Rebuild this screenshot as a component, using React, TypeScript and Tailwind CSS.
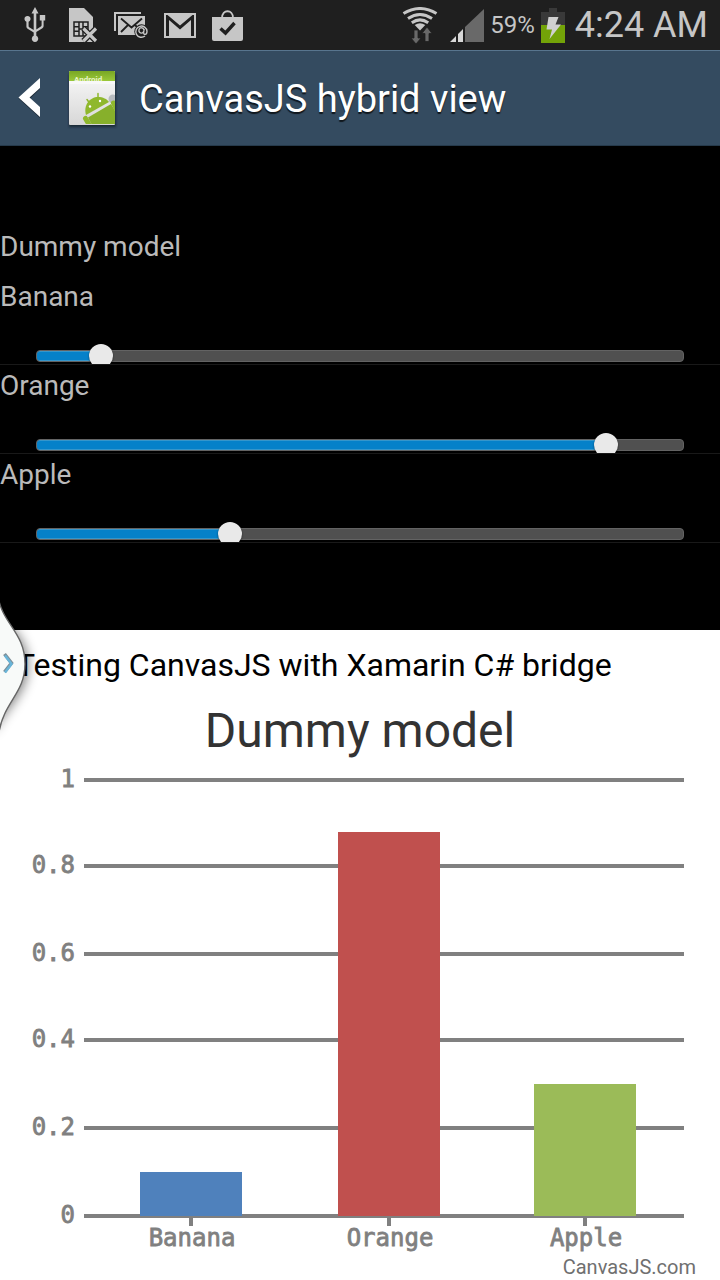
import { useState } from "react";

type Item = { name: string; value: number; color: string };

const initial: Item[] = [
  { name: "Banana", value: 10, color: "#4f81bc" },
  { name: "Orange", value: 88, color: "#c0504e" },
  { name: "Apple", value: 30, color: "#9bbb58" },
];

const gridLines = [
  { label: "1", y: 20 },
  { label: "0.8", y: 106 },
  { label: "0.6", y: 194 },
  { label: "0.4", y: 280 },
  { label: "0.2", y: 368 },
  { label: "0", y: 456 },
];

const barLeft = [140, 338, 534];

function UsbIcon() {
  return (
    <svg width="22" height="36" viewBox="0 0 22 36" fill="#c6c6c6" aria-hidden="true">
      <path d="M11 0 L14.5 6.5 H12.3 V22.5 L16.8 19.6 Q17.6 19 17.6 18 V13.5 H15.8 V8 H21.2 V13.5 H19.6 V19.2 Q19.6 20.4 18.4 21.2 L12.3 25 V28.8 A3.2 3.2 0 1 1 9.7 28.8 V25.6 L3.6 21.8 Q2.4 21 2.4 19.8 V14.7 A3 3 0 1 1 4.6 14.7 V18.9 Q4.6 19.7 5.2 20.2 L9.7 23 V6.5 H7.5 Z" />
    </svg>
  );
}

function SimIcon() {
  return (
    <svg width="30" height="35" viewBox="0 0 30 35" aria-hidden="true">
      <path d="M1 0 H16 L25 9 V34 H1 Z" fill="#c6c6c6" />
      <path d="M6 14 H20 V28 H6 Z M6 18.7 H11 M6 23.3 H11 M15 18.7 H20 M15 23.3 H20 M11 14 V28 M15 14 V28 M11 21 H15" fill="none" stroke="#1f1f1f" strokeWidth="1.5" />
      <path d="M15.5 20.5 L28 33 M28 20.5 L15.5 33" stroke="#1f1f1f" strokeWidth="6" />
      <path d="M15.5 20.5 L28 33 M28 20.5 L15.5 33" stroke="#c6c6c6" strokeWidth="3.2" />
    </svg>
  );
}

function MailAtIcon() {
  return (
    <svg width="34" height="27" viewBox="0 0 34 27" aria-hidden="true">
      <path d="M1 19 V1 H27" fill="none" stroke="#c6c6c6" strokeWidth="2" />
      <rect x="4" y="4" width="27" height="19" fill="#c6c6c6" />
      <path d="M7 6.5 L17.5 15.5 L28 6.5 M7 20 L14 13 M28 20 L21 13" fill="none" stroke="#1f1f1f" strokeWidth="1.8" />
      <circle cx="27.5" cy="19.5" r="7.2" fill="#1f1f1f" />
      <path d="M31 24 A5.6 5.6 0 1 1 33 19.3 C33 23.4 29.3 23 29.6 20.5 L30.2 16.8 M29.7 19.5 A2.5 2.7 0 1 1 29.9 18.6" fill="none" stroke="#c6c6c6" strokeWidth="1.4" />
    </svg>
  );
}

function GmailIcon() {
  return (
    <svg width="32" height="25" viewBox="0 0 32 25" aria-hidden="true">
      <rect width="32" height="25" fill="#c6c6c6" />
      <path d="M2 2 V23 H5 V7 L16 16.6 L27 7 V23 H30 V2 H28.5 L16 12.500 L3.5 2 Z" fill="#1f1f1f" />
    </svg>
  );
}

function BagIcon() {
  return (
    <svg width="31" height="31" viewBox="0 0 31 31" aria-hidden="true">
      <path d="M10 8 C10 -1 21 -1 21 8" fill="none" stroke="#c6c6c6" strokeWidth="1.8" />
      <path d="M0 7 H31 V29 Q31 31 29 31 H2 Q0 31 0 29 Z" fill="#c6c6c6" />
      <path d="M8.5 18.5 L13.5 23 L22.5 13" fill="none" stroke="#1f1f1f" strokeWidth="3.4" />
    </svg>
  );
}

function WifiIcon() {
  return (
    <svg width="36" height="37" viewBox="0 0 36 37" aria-hidden="true">
      <g fill="none" stroke="#c6c6c6" strokeWidth="3">
        <path d="M1.5 6.5 Q18 -3.5 34.5 6.5" />
        <path d="M6 11.5 Q18 3.5 30 11.5" />
        <path d="M9.8 15.7 Q18 10 26.2 15.7" />
      </g>
      <path d="M12.7 18 Q18 14.4 23.3 18 L18 23.5 Z" fill="#c6c6c6" />
      <path d="M12 23 H16 V31 H19 L14 37 L9 31 H12 Z M23 34.5 H27 V26.5 H30 L25 20 L20 26.5 H23 Z" fill="#696969" stroke="#1f1f1f" strokeWidth="0.8" />
    </svg>
  );
}

function SignalIcon() {
  return (
    <svg width="34" height="33" viewBox="0 0 34 33" aria-hidden="true">
      <path d="M0 33 L6 27 V33 Z M8 25 L13 20 V33 H8 Z" fill="#d8d8d8" />
      <path d="M15 18 L34 0 V33 H15 Z" fill="#696969" />
    </svg>
  );
}

function BatteryIcon() {
  return (
    <svg width="24" height="35" viewBox="0 0 24 35" aria-hidden="true">
      <path d="M8 0 H16 V4 H24 V35 H0 V4 H8 Z" fill="#393939" />
      <rect y="17" width="24" height="18" fill="#73a308" />
      <path d="M7.5 9 H17.5 L14.5 16.5 H20 L8.5 31 L11 21.5 H5.5 Z" fill="#d0d0d0" />
    </svg>
  );
}

function AppIcon() {
  return (
    <svg width="50" height="60" viewBox="0 0 50 60" className="overflow-visible" aria-hidden="true">
      <defs>
        <linearGradient id="paper" x1="0" y1="0" x2="0" y2="1">
          <stop offset="0" stopColor="#fafafa" />
          <stop offset="1" stopColor="#d7d7d7" />
        </linearGradient>
        <linearGradient id="cover" x1="0" y1="0" x2="0" y2="1">
          <stop offset="0" stopColor="#79a724" />
          <stop offset="1" stopColor="#9dcb3b" />
        </linearGradient>
        <clipPath id="sheet">
          <rect x="1" y="4" width="45" height="52" />
        </clipPath>
        <filter id="soft" x="-20%" y="-20%" width="140%" height="140%">
          <feGaussianBlur stdDeviation="1.3" />
        </filter>
      </defs>
      <rect x="0" y="6" width="47" height="53" fill="#14212d" opacity="0.8" filter="url(#soft)" />
      <rect x="0" y="3" width="46" height="54" rx="1" fill="url(#paper)" />
      <rect x="0" y="3" width="46" height="11" rx="1" fill="url(#cover)" />
      <text x="5" y="14" fontSize="8" fontWeight="700" fontFamily="Roboto, sans-serif" fill="#e8f4c8">Android</text>
      <rect x="0" y="13" width="46" height="3" fill="#f8f8f8" />
      <g clipPath="url(#sheet)">
        <circle cx="44" cy="31" r="4.5" fill="#b8bcc0" />
        <path d="M17 47 C14 37 21 29 29 29 C34 29 38 31 40 34 Z" fill="#8fb82d" />
        <path d="M19 49.500 L42 36 L47 44 V57 H23 Z" fill="#87b02b" />
        <path d="M20.500 35 L18 31.500 M29 30 L29 25.500" stroke="#8fb82d" strokeWidth="1.500" strokeLinecap="round" />
        <path d="M16.500 50.500 L21 58 M44.500 35 L49 44" stroke="#8fb82d" strokeWidth="5" strokeLinecap="round" />
        <circle cx="21" cy="38.500" r="1.2" fill="#fff" />
        <circle cx="31" cy="33" r="1.2" fill="#fff" />
      </g>
    </svg>
  );
}

function StatusBar() {
  return (
    <div className="flex h-[50px] items-center justify-between bg-[#1f1f1f] pr-3 pl-6 text-[#c6c6c6]">
      <div className="flex items-center gap-4">
        <div className="mr-1.5"><UsbIcon /></div>
        <SimIcon />
        <MailAtIcon />
        <GmailIcon />
        <BagIcon />
      </div>
      <div className="flex items-center">
        <WifiIcon />
        <div className="ml-3"><SignalIcon /></div>
        <span className="ml-1.5 text-[24px] leading-none">59%</span>
        <div className="mx-1.5"><BatteryIcon /></div>
        <span className="ml-1 text-[36px] leading-none">4:24 AM</span>
      </div>
    </div>
  );
}

function SliderRow({ item, onChange }: { item: Item; onChange: (value: number) => void }) {
  const id = "slider-" + item.name.toLowerCase();
  return (
    <div className="flex h-[89px] flex-col overflow-hidden border-b border-[#191919]">
      <label htmlFor={id} className="h-16 shrink-0 pt-[5px] text-[28px] leading-8">{item.name}</label>
      <div className="mx-6 grid h-8 shrink-0 items-center">
        <div className="col-start-1 row-start-1 mx-3 h-3 overflow-hidden rounded-[4px] border border-[#636363] bg-[#505050]">
          <div className="h-full rounded-l-[3px] border-y border-[#3596cb] bg-[#0581c9]" style={{ width: `${item.value}%` }} />
        </div>
        <input
          id={id}
          type="range"
          min={0}
          max={100}
          value={item.value}
          onChange={(e) => onChange(Number(e.target.value))}
          className="col-start-1 row-start-1 m-0 h-8 w-full appearance-none bg-transparent [&::-webkit-slider-thumb]:size-6 [&::-webkit-slider-thumb]:appearance-none [&::-webkit-slider-thumb]:rounded-full [&::-webkit-slider-thumb]:bg-[#e9e9e9] [&::-webkit-slider-thumb]:shadow-[0_1px_2px_rgba(0,0,0,0.5)]"
        />
      </div>
    </div>
  );
}

function Chart({ items }: { items: Item[] }) {
  return (
    <svg viewBox="0 0 720 520" className="block w-full" role="img" aria-label="Dummy model">
      {gridLines.map((line) => (
        <g key={line.label}>
          <rect x="84" y={line.y - 2} width="600" height="4" fill="#808080" />
          <text x="75" y={line.y + 7} textAnchor="end" fontSize="24" fill="#808080" stroke="#808080" strokeWidth="0.8" fontFamily="'DejaVu Sans Mono', monospace">
            {line.label}
          </text>
        </g>
      ))}
      {items.map((item, i) => {
        const height = Math.ceil(item.value * 2.18) * 2;
        return (
          <g key={item.name}>
            <rect x={barLeft[i]} y={456 - height} width="102" height={height} fill={item.color} />
            <rect x={barLeft[i] + 49} y="458" width="4" height="8" fill="#808080" />
            <text x={barLeft[i] + 52} y="486" textAnchor="middle" fontSize="24" fill="#808080" stroke="#808080" strokeWidth="0.8" fontFamily="'DejaVu Sans Mono', monospace">
              {item.name}
            </text>
          </g>
        );
      })}
      <a href="#canvasjs">
        <text x="696" y="514" textAnchor="end" fontSize="20" fill="#707070" fontFamily="Roboto, sans-serif">CanvasJS.com</text>
      </a>
    </svg>
  );
}

function EdgeHandle() {
  return (
    <button type="button" aria-label="Open side panel" className="absolute top-[590px] left-0">
      <svg width="50" height="150" viewBox="0 0 50 150" className="block">
        <defs>
          <filter id="handleShadow" x="-50%" y="-20%" width="250%" height="140%">
            <feGaussianBlur stdDeviation="6" />
          </filter>
        </defs>
        <path d="M-8 12 C2 32 28 45 28 75 C28 103 4 120 -8 144 Z" fill="#000" opacity="0.5" filter="url(#handleShadow)" />
        <path d="M-2 6 C2 34 25 42 25 74 C25 103 4 112 -1 142 Z" fill="#f8faf9" stroke="#666" strokeWidth="1.4" />
        <path d="M4.500 64 L11.500 73 L4.500 82" fill="none" stroke="#7e8f98" strokeWidth="3.5" />
        <path d="M5 65.500 L11.500 74 L5 82.500" fill="none" stroke="#69b4d8" strokeWidth="2.500" />
      </svg>
    </button>
  );
}

export default function App() {
  const [items, setItems] = useState(initial);
  const update = (index: number, value: number) =>
    setItems(items.map((item, i) => (i === index ? { ...item, value } : item)));

  return (
    <div className="relative min-h-screen overflow-hidden bg-white font-[Roboto,sans-serif]">
      <StatusBar />
      <header className="flex h-24 items-center border-t border-b border-t-[#58758e] border-b-[#263a4b] bg-[#344b60] pl-[18px]">
        <button type="button" aria-label="Back" className="mr-7">
          <svg width="23" height="40" viewBox="0 0 23 40" className="block">
            <path d="M22 1 V11 L12 20.500 L22 30 V40 L0.500 20.500 Z" fill="#1d2b38" />
            <path d="M22 0 V10 L11.500 19.500 L22 29 V39 L0.500 19.500 Z" fill="#fff" />
          </svg>
        </button>
        <AppIcon />
        <h1 className="ml-5 pt-0.5 text-[38px] leading-none text-white [text-shadow:0_2px_1px_rgba(0,0,0,0.7)]">CanvasJS hybrid view</h1>
      </header>
      <section className="bg-black pt-[85px] pb-[87px] text-[#bababa]">
        <h2 className="h-[45px] text-[28px] leading-8">Dummy model</h2>
        {items.map((item, i) => (
          <SliderRow key={item.name} item={item} onChange={(value) => update(i, value)} />
        ))}
      </section>
      <main className="pt-[15px]">
        <p className="px-4 text-[32px] leading-10 text-black">Testing CanvasJS with Xamarin C# bridge</p>
        <h2 className="pt-[17px] text-center text-[48px] leading-[58px] text-[#333]">Dummy model</h2>
        <Chart items={items} />
      </main>
      <EdgeHandle />
    </div>
  );
}
